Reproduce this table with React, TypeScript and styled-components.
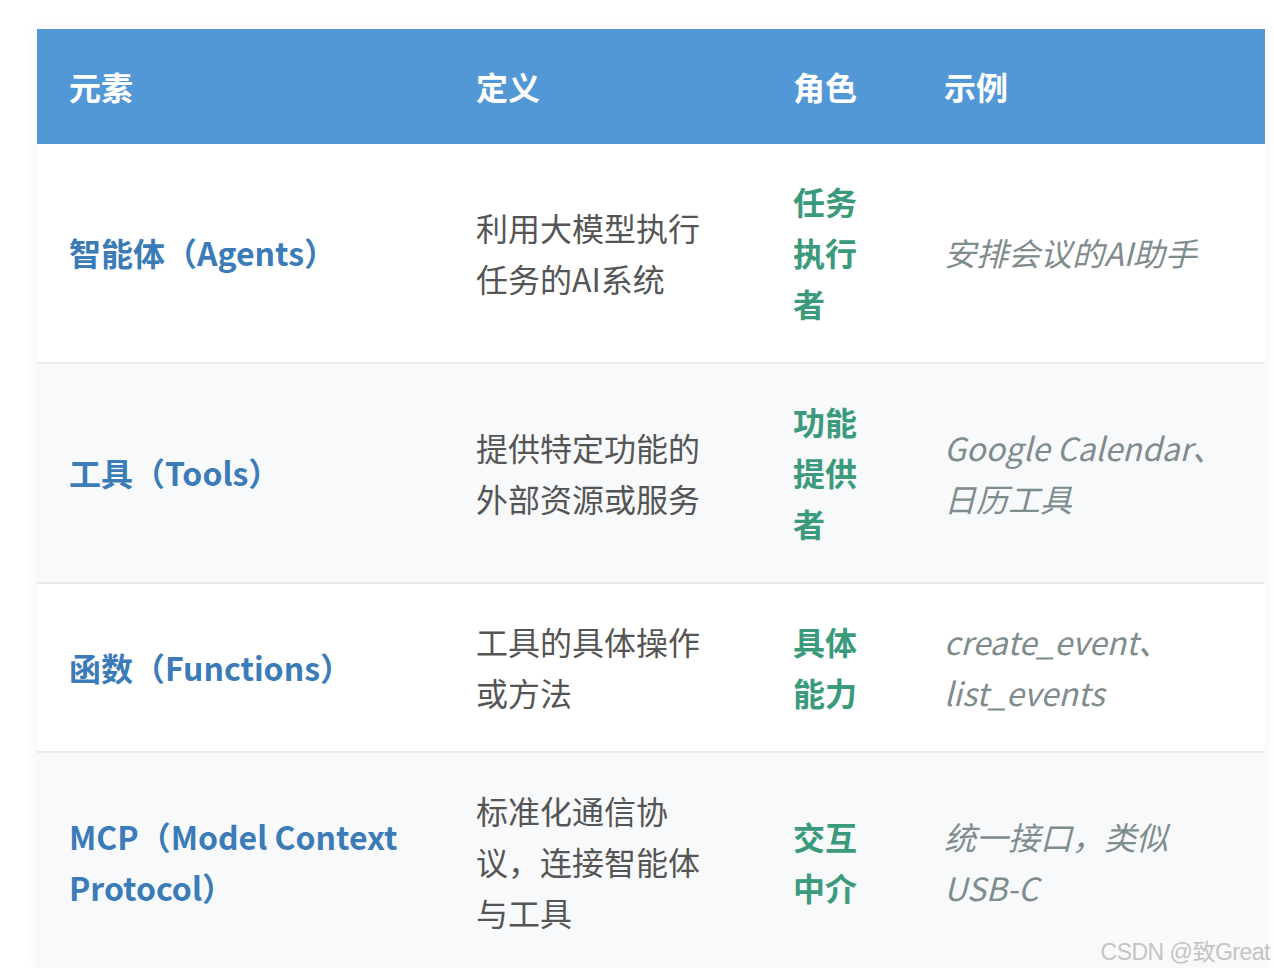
import React from "react";
import styled, { createGlobalStyle } from "styled-components";

const Global = createGlobalStyle`
  html, body { margin: 0; padding: 0; background: #ffffff; }
  body { font-family: "Noto Sans CJK SC", "Noto Sans", sans-serif; }
`;

const Page = styled.div`
  position: relative;
  padding: 29px 9px 0 37px;
  min-height: 968px;
  box-sizing: border-box;
  overflow: hidden;
`;

const Table = styled.table`
  width: 1228px;
  border-collapse: collapse;
  table-layout: fixed;
  box-shadow: 0 0 14px rgba(0, 0, 0, 0.05);
  font-size: 32px;
  line-height: 51px;
`;

const Head = styled.th`
  background: #5398d6;
  color: #ffffff;
  font-weight: 700;
  text-align: left;
  padding: 32px 32px 32px 32px;
  vertical-align: middle;
`;

const Row = styled.tr<{ $alt?: boolean }>`
  background: ${(p) => (p.$alt ? "#f7f9fb" : "#ffffff")};
  border-bottom: 2px solid #ebebeb;
`;

type Kind = "name" | "def" | "role" | "example";

const colors: Record<Kind, string> = {
  name: "#3b7bb7",
  def: "#555555",
  role: "#3a9a7b",
  example: "#7f8c8d",
};

const Cell = styled.td<{ $kind: Kind }>`
  padding: 32px 32px 33px 32px;
  vertical-align: middle;
  color: ${(p) => colors[p.$kind]};
  font-weight: ${(p) => (p.$kind === "name" || p.$kind === "role" ? 700 : 400)};
  font-style: ${(p) => (p.$kind === "example" ? "italic" : "normal")};
  word-break: break-word;
`;

const Watermark = styled.div`
  position: absolute;
  right: 4px;
  bottom: 6px;
  font-family: "Liberation Sans", "Noto Sans CJK SC", sans-serif;
  font-size: 23px;
  color: #c4c4c4;
  letter-spacing: -0.5px;
`;

const rows = [
  {
    name: "智能体（Agents）",
    def: "利用大模型执行任务的AI系统",
    role: "任务执行者",
    example: "安排会议的AI助手",
  },
  {
    name: "工具（Tools）",
    def: "提供特定功能的外部资源或服务",
    role: "功能提供者",
    example: "Google Calendar、日历工具",
  },
  {
    name: "函数（Functions）",
    def: "工具的具体操作或方法",
    role: "具体能力",
    example: "create_event、list_events",
  },
  {
    name: "MCP（Model Context Protocol）",
    def: "标准化通信协议，连接智能体与工具",
    role: "交互中介",
    example: "统一接口，类似USB-C",
  },
];

export default function App() {
  return (
    <>
      <Global />
      <Page>
        <Table>
          <colgroup>
            <col style={{ width: 407 }} />
            <col style={{ width: 317 }} />
            <col style={{ width: 151 }} />
            <col style={{ width: 353 }} />
          </colgroup>
          <thead>
            <tr>
              <Head>元素</Head>
              <Head>定义</Head>
              <Head>角色</Head>
              <Head>示例</Head>
            </tr>
          </thead>
          <tbody>
            {rows.map((r, i) => (
              <Row key={r.name} $alt={i % 2 === 1}>
                <Cell $kind="name">{r.name}</Cell>
                <Cell $kind="def">{r.def}</Cell>
                <Cell $kind="role">{r.role}</Cell>
                <Cell $kind="example">{r.example}</Cell>
              </Row>
            ))}
          </tbody>
        </Table>
        <Watermark>CSDN @致Great</Watermark>
      </Page>
    </>
  );
}
